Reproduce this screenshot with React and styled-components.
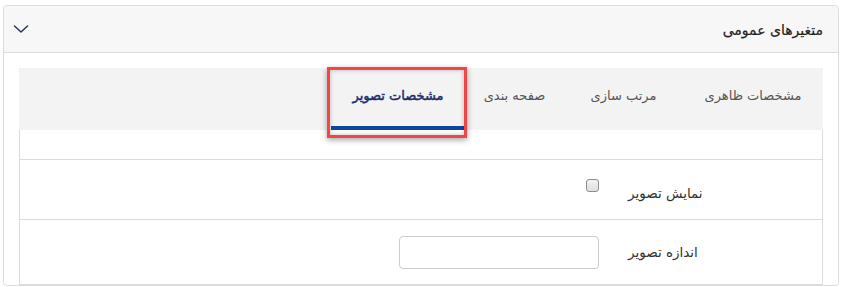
import React from "react";
import styled, { createGlobalStyle } from "styled-components";

const Global = createGlobalStyle`
  html, body { margin: 0; padding: 0; background: #fff; }
  body { font-family: "DejaVu Sans", Tahoma, sans-serif; color: #333; }
`;

const Card = styled.section`
  direction: rtl;
  margin: 5px 3px 0;
  border: 1px solid #dcdcdc;
  border-radius: 4px;
  background: #fff;
`;

const CardHeader = styled.header`
  display: flex;
  align-items: center;
  justify-content: space-between;
  height: 46px;
  padding: 0 15px 0 9px;
  background: #f7f7f7;
  border-bottom: 1px solid #dcdcdc;
  border-radius: 4px 4px 0 0;
`;

const Title = styled.h3`
  margin: 0;
  font-size: 14px;
  font-weight: normal;
  color: #222;
  -webkit-text-stroke: 0.2px #222;
  padding-top: 1px;
`;

const CardBody = styled.div`
  padding: 15px 15px 0;
`;

const TabsBox = styled.div`
  position: relative;
`;

const TabBar = styled.nav`
  display: flex;
  height: 62px;
  background: #f3f3f3;
`;

const Tab = styled.div`
  box-sizing: border-box;
  width: ${(p) => p.$w}px;
  display: flex;
  align-items: center;
  justify-content: center;
  padding-bottom: 3px;
  font-size: 13px;
  color: ${(p) => (p.$active ? "#1b2b6e" : "#555")};
  -webkit-text-stroke: ${(p) => (p.$active ? "0.45px #1b2b6e" : "0")};
  border-bottom: 4px solid ${(p) => (p.$active ? "#0d46a0" : "transparent")};
  white-space: nowrap;
`;

const Highlight = styled.div`
  position: absolute;
  left: 308px;
  top: -1px;
  width: 140px;
  height: 71px;
  box-sizing: border-box;
  border: 3px solid #f24545;
  box-shadow: 0 2px 6px rgba(0, 0, 0, 0.35), inset 0 0 4px rgba(0, 0, 0, 0.25);
  pointer-events: none;
`;

const Panel = styled.div`
  border: 1px solid #dcdcdc;
  border-top: none;
`;

const Row = styled.div`
  display: flex;
  align-items: center;
  height: ${(p) => p.$h}px;
  border-bottom: ${(p) => (p.$last ? "none" : "1px solid #dcdcdc")};
`;

const Label = styled.label`
  width: 194px;
  text-align: left;
  font-size: 13.5px;
  line-height: 20px;
  color: #333;
  margin-top: ${(p) => p.$offset || 0}px;
  white-space: nowrap;
`;

const Control = styled.div`
  display: flex;
  margin-right: 29px;
`;

const Check = styled.input.attrs({ type: "checkbox" })`
  appearance: none;
  -webkit-appearance: none;
  box-sizing: border-box;
  width: 13px;
  height: 13px;
  margin: 0 0 9px 0;
  border: 1px solid #8e8e8e;
  border-radius: 3px;
  background: linear-gradient(#f2f2f2, #dedede);
`;

const TextInput = styled.input.attrs({ type: "text" })`
  box-sizing: border-box;
  width: 200px;
  height: 33px;
  border: 1px solid #cccccc;
  border-radius: 4px;
  background: #fff;
  outline: none;
`;

const tabs = [
  { label: "مشخصات ظاهری", w: 140 },
  { label: "مرتب سازی", w: 119 },
  { label: "صفحه بندی", w: 99 },
  { label: "مشخصات تصویر", w: 134, active: true },
];

export default function App() {
  return (
    <>
      <Global />
      <Card>
        <CardHeader>
          <Title>متغیرهای عمومی</Title>
          <svg width="16" height="10" viewBox="0 0 16 10">
            <path d="M1.5 2 L8 8 L14.5 2" fill="none" stroke="#2b3a67" strokeWidth="1.6" strokeLinecap="round" strokeLinejoin="round" />
          </svg>
        </CardHeader>
        <CardBody>
          <TabsBox>
            <TabBar>
              {tabs.map((t) => (
                <Tab key={t.label} $w={t.w} $active={t.active}>
                  {t.label}
                </Tab>
              ))}
            </TabBar>
            <Highlight />
            <Panel>
              <Row $h={29} />
              <Row $h={59}>
                <Label $offset={7}>نمایش تصویر</Label>
                <Control>
                  <Check />
                </Control>
              </Row>
              <Row $h={64} $last>
                <Label>اندازه تصویر</Label>
                <Control>
                  <TextInput />
                </Control>
              </Row>
            </Panel>
          </TabsBox>
        </CardBody>
      </Card>
    </>
  );
}
